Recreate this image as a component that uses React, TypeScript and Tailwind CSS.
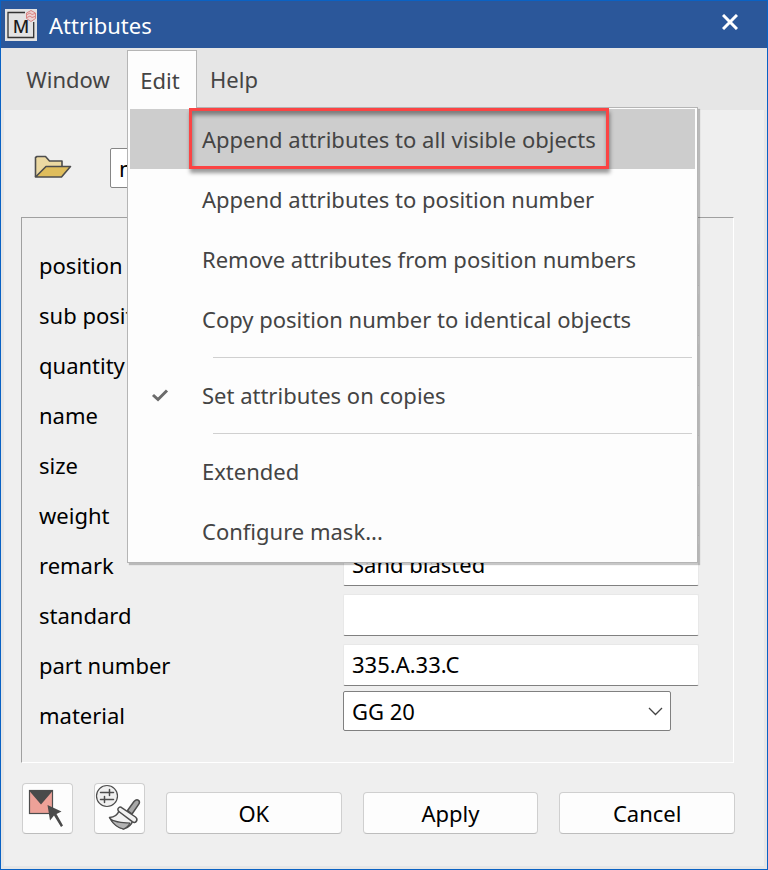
import React from 'react';

type MenuEntry = {
  label: string;
  active?: boolean;
  checked?: boolean;
};

const menuGroups: MenuEntry[][] = [
  [
    { label: "Append attributes to all visible objects", active: true },
    { label: "Append attributes to position number" },
    { label: "Remove attributes from position numbers" },
    { label: "Copy position number to identical objects" },
  ],
  [{ label: "Set attributes on copies", checked: true }],
  [{ label: "Extended" }, { label: "Configure mask..." }],
];

const fields = [
  { id: "position", label: "position", value: "" },
  { id: "sub-position", label: "sub position", value: "" },
  { id: "quantity", label: "quantity", value: "" },
  { id: "name", label: "name", value: "" },
  { id: "size", label: "size", value: "" },
  { id: "weight", label: "weight", value: "" },
  { id: "remark", label: "remark", value: "Sand blasted" },
  { id: "standard", label: "standard", value: "" },
  { id: "part-number", label: "part number", value: "335.A.33.C" },
];

const AppLogo: React.FC = () => (
  <span className="relative flex h-8 w-8 shrink-0 items-center justify-center bg-[#e3e3e3]">
    <svg className="absolute inset-0" width="32" height="32" viewBox="0 0 32 32" fill="none" aria-hidden="true">
      <path d="M20 3.500H3V28.500H28.700V13" stroke="#333" strokeWidth="1.300" />
      <path d="M26 1.500l4.500 2.500v5.500L26 12.500 21.500 9.500V4z" stroke="#d98585" strokeWidth="1" fill="#ecd3d3" />
      <path d="M22 5.500l3-1.500 2 1.500 3-1M22 8.500l3-1.500 2 1.500 3-1" stroke="#d98585" strokeWidth="1" />
    </svg>
    <span className="relative pt-0.5 text-[18px] leading-none font-medium text-[#1c1c1c]">M</span>
  </span>
);

const FolderIcon: React.FC = () => (
  <svg width="38" height="24" viewBox="0 0 38 24" fill="none" stroke="#4d4d4d" strokeWidth="1.600" strokeLinejoin="round" aria-hidden="true">
    <path d="M1.500 22V2.500L3 1.500h8.500l4 4.500H28v6" fill="#ecd9a2" />
    <path d="M1.500 22L12 11.500h24.500L27.500 22z" fill="#dfbd5c" />
  </svg>
);

const PickIcon: React.FC = () => (
  <svg width="49" height="49" viewBox="0 0 49 49" aria-hidden="true">
    <rect x="6.500" y="6.500" width="23" height="23" fill="#eda198" stroke="#4d4d4d" strokeWidth="1.200" />
    <path d="M6 6.500h24L18 20.500z" fill="#4a4a4a" />
    <path d="M24.500 21l14 6.500-5 2.500 6.500 11.500-2 1.500-7-11.500-4 5z" fill="#4a4a4a" />
  </svg>
);

const BrushIcon: React.FC = () => (
  <svg width="49" height="49" viewBox="0 0 49 49" fill="none" stroke="#4d4d4d" strokeWidth="1.500" strokeLinejoin="round" strokeLinecap="round" aria-hidden="true">
    <circle cx="12" cy="12" r="10.500" fill="#f0f0f0" strokeWidth="1.200" />
    <path d="M5.500 8.500h13M14.500 5.500v6M5.500 15.500h13M9.500 12.500v6" />
    <path d="M32.500 26.500L39 17.500q2.500-2.800 4.500-1.200t-.2 4.500L37 30z" fill="#a8a8a8" />
    <path d="M24 27C22.500 31 19.500 33 14.500 33.500c3 5.500 8 10 14 11.500 4-1 8-4 9.500-9z" fill="#f2f2f2" />
    <path d="M15 34.500c5 4.500 12 4 20 4.500-1.500 3-3.500 5-6.500 6-5.500-1-10-4.500-13.500-10.500z" fill="#b3b3b3" strokeWidth="1.200" />
    <path d="M24 23.500c1-.8 2-.5 3 .3l13.500 9.200c1.500 1.200 2 2.300 1 4s-2.600 1.800-4.200.7L24.500 28c-2-1.500-2.200-3.200-.5-4.500z" fill="#f2f2f2" />
  </svg>
);

const CheckIcon: React.FC = () => (
  <svg width="18" height="14" viewBox="0 0 18 14" fill="none" stroke="#6b6b6b" strokeWidth="3" aria-hidden="true">
    <path d="M2 7l5 4.500 9-9" />
  </svg>
);

const MenuItem: React.FC<{ item: MenuEntry }> = ({ item }) => (
  <button
    type="button"
    role={item.checked ? "menuitemcheckbox" : "menuitem"}
    aria-checked={item.checked}
    className={`flex h-[60px] w-full items-center text-left ${item.active ? "relative bg-[#cdcdcd]" : ""}`}
  >
    <span className="flex w-[59px] shrink-0 justify-center">{item.checked && <CheckIcon />}</span>
    {item.active ? (
      <span className="-mt-px flex h-[61px] items-center border-3 border-[#fb4444] px-[10px] whitespace-nowrap shadow-[1px_4px_4px_rgba(0,0,0,0.4),inset_1px_4px_4px_rgba(0,0,0,0.4)]">
        {item.label}
      </span>
    ) : (
      <span className="px-[13px] whitespace-nowrap">{item.label}</span>
    )}
  </button>
);

const EditMenu: React.FC = () => (
  <div
    role="menu"
    aria-label="Edit"
    className="absolute top-[57px] left-0 z-10 w-[571px] border border-[#b5b5b5] bg-[#fdfdfd] px-[2px] py-px shadow-[2px_2px_1px_rgba(0,0,0,0.22)]"
  >
    {menuGroups.map((group, index) => (
      <React.Fragment key={index}>
        {index > 0 && (
          <div role="separator" className="h-4 pt-2 pr-[3px] pl-[83px]">
            <div className="h-px bg-[#d0d0d0]" />
          </div>
        )}
        {group.map((item) => (
          <MenuItem key={item.label} item={item} />
        ))}
      </React.Fragment>
    ))}
  </div>
);

export default function App() {
  return (
    <div className="flex min-h-screen flex-col border border-[#0a62c4] bg-[#e6e6e6] font-['Noto_Sans','Segoe_UI',sans-serif] text-[22px] leading-[30px] text-black">
      <header className="flex h-[47px] items-center bg-[#2b579a] pr-[29px] pl-1 text-white">
        <AppLogo />
        <h1 className="ml-3 flex-1">Attributes</h1>
        <button type="button" aria-label="Close" className="-mt-1.5">
          <svg width="16" height="16" viewBox="0 0 16 16" fill="none" stroke="currentColor" strokeWidth="3" aria-hidden="true">
            <path d="M1 1l14 14M15 1L1 15" />
          </svg>
        </button>
      </header>

      <nav className="flex h-[62px] pt-[2px] text-[#444]">
        <button type="button" className="w-[126px] pb-0.5 pl-2">Window</button>
        <div className="relative">
          <button type="button" aria-expanded="true" className="relative z-20 h-[58px] w-[70px] border border-b-0 border-[#b5b5b5] bg-[#fdfdfd] pr-1">
            Edit
          </button>
          <EditMenu />
        </div>
        <button type="button" className="px-[13px] pb-0.5">Help</button>
      </nav>

      <main className="mx-[3px] mb-[3px] flex flex-1 flex-col bg-[#efefef] px-[17px] pt-[38px] pb-8">
        <div className="flex h-10 items-center">
          <button type="button" aria-label="Open" className="ml-[13px] w-[76px] pb-0.5">
            <FolderIcon />
          </button>
          <select aria-label="Mask" className="h-10 w-[500px] appearance-none rounded-xs border border-[#868686] bg-white px-2">
            <option>name</option>
          </select>
        </div>

        <section className="mt-[29px] mr-[13px] border border-t-[#a0a0a0] border-r-white border-b-white border-l-[#a0a0a0] pt-[22px] pr-[34px] pb-[22px] pl-[17px]">
          {fields.map((field) => (
            <div key={field.id} className="flex h-[50px] items-center">
              <label htmlFor={field.id} className="w-[304px] shrink-0">{field.label}</label>
              <input
                id={field.id}
                type="text"
                defaultValue={field.value}
                className="h-[42px] min-w-0 flex-1 rounded-xs border border-[#e8e8e8] border-b-[#808080] bg-white px-2 pb-0.5 outline-none"
              />
            </div>
          ))}
          <div className="flex h-[50px] items-center">
            <label htmlFor="material" className="w-[304px] shrink-0">material</label>
            <div className="relative mr-7 -mt-2 flex-1">
              <select id="material" defaultValue="GG 20" className="h-10 w-full appearance-none rounded-xs border border-[#808080] bg-white px-2 outline-none">
                <option>GG 20</option>
              </select>
              <svg className="pointer-events-none absolute top-4 right-2" width="15" height="9" viewBox="0 0 15 9" fill="none" stroke="#444" strokeWidth="1.300" aria-hidden="true">
                <path d="M1 1l6.500 6.500L14 1" />
              </svg>
            </div>
          </div>
        </section>

        <footer className="mt-5 mr-3 ml-px flex items-end gap-[21px]">
          <button type="button" aria-label="Pick object" className="h-[51px] w-[51px] shrink-0 overflow-hidden rounded border border-[#cfcfcf] border-b-[#bdbdbd] bg-[#fdfdfd]">
            <PickIcon />
          </button>
          <button type="button" aria-label="Transfer attributes" className="h-[51px] w-[51px] shrink-0 overflow-hidden rounded border border-[#cfcfcf] border-b-[#bdbdbd] bg-[#fdfdfd]">
            <BrushIcon />
          </button>
          {["OK", "Apply", "Cancel"].map((label) => (
            <button key={label} type="button" className="h-[42px] flex-1 rounded border border-[#cfcfcf] border-b-[#bdbdbd] bg-[#fdfdfd]">
              {label}
            </button>
          ))}
        </footer>
      </main>
    </div>
  );
}
